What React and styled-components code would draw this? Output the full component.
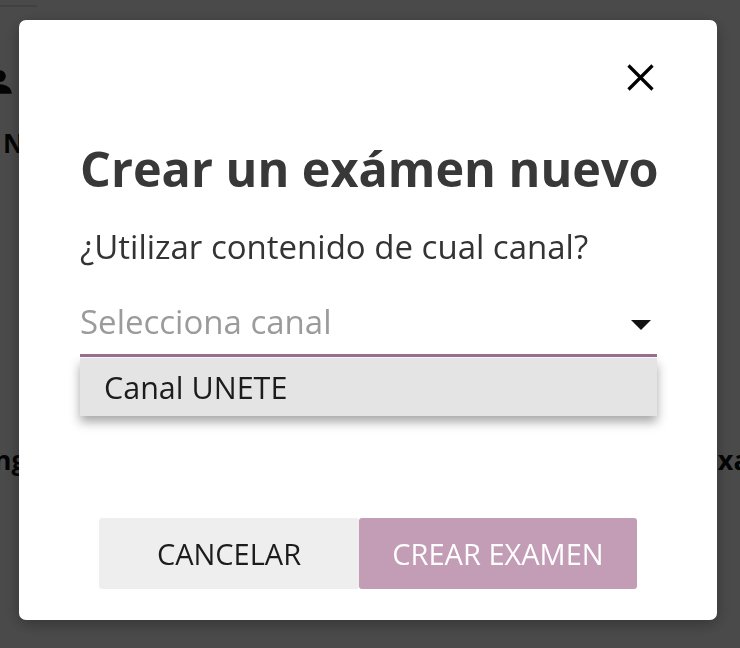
import React, { useState } from "react";
import styled, { createGlobalStyle } from "styled-components";

const GlobalStyle = createGlobalStyle`
	html, body {
		margin: 0;
		padding: 0;
		width: 740px;
		height: 648px;
		overflow: hidden;
		font-family: "Open Sans", "Noto Sans", sans-serif;
		background: #fff;
	}
`;

const Page = styled.div`
	width: 740px;
	height: 648px;
	position: relative;
	overflow: hidden;
	color: #111;
	.topline {
		width: 37px;
		height: 2px;
		margin-top: 5px;
		background: #e0e0e0;
	}
	.user {
		margin: 60px 0 0 -14px;
		display: block;
	}
	.heading {
		margin: 28px 0 0 3px;
		font-size: 26px;
		font-weight: 700;
	}
	.row {
		display: flex;
		justify-content: space-between;
		margin-top: 280px;
		font-size: 27px;
		font-weight: 700;
	}
	.row span:first-child {
		margin-left: -83px;
	}
	.row span:last-child {
		margin-right: -70px;
	}
`;

const Overlay = styled.div`
	position: fixed;
	inset: 0;
	background: rgba(0, 0, 0, 0.71);
	display: flex;
	align-items: flex-start;
	padding: 20px 0 0 19px;
	box-sizing: border-box;
`;

const Modal = styled.div`
	width: 698px;
	height: 600px;
	background: #fff;
	border-radius: 7px;
	box-sizing: border-box;
	padding: 44px 60px 31px 61px;
	display: flex;
	flex-direction: column;
	box-shadow: 0 4px 16px rgba(0, 0, 0, 0.3);
`;

const Header = styled.div`
	display: flex;
	justify-content: flex-end;
	margin-right: 3px;
`;

const CloseButton = styled.button`
	border: none;
	background: none;
	padding: 0;
	width: 27px;
	height: 27px;
	cursor: pointer;
	display: flex;
`;

const Title = styled.h1`
	margin: 49px 0 0;
	font-size: 48.5px;
	line-height: 56px;
	font-weight: 700;
	color: #383838;
	white-space: nowrap;
`;

const Question = styled.p`
	margin: 31px 0 0;
	font-size: 33px;
	line-height: 40px;
	color: #333;
	white-space: nowrap;
`;

const SelectField = styled.div`
	position: relative;
	margin-top: 35px;
	height: 52px;
	border-bottom: 3px solid #9c6f90;
	display: flex;
	align-items: flex-start;
	justify-content: space-between;
	font-size: 33px;
	line-height: 40px;
	color: #9b9b9b;
	cursor: pointer;
`;

const Caret = styled.span`
	width: 0;
	height: 0;
	margin: 18px 6px 0 0;
	border-left: 10px solid transparent;
	border-right: 10px solid transparent;
	border-top: 10px solid #111;
`;

const Menu = styled.ul`
	position: absolute;
	top: 56px;
	left: 0;
	right: 0;
	margin: 0;
	padding: 0;
	list-style: none;
	background: #e4e4e4;
	box-shadow: 0 6px 10px rgba(0, 0, 0, 0.35);
`;

const Option = styled.li`
	height: 58px;
	padding-left: 24px;
	display: flex;
	align-items: center;
	font-size: 30.5px;
	color: #1c1c1c;
`;

const Actions = styled.div`
	margin-top: auto;
	display: flex;
	justify-content: center;
	margin-left: -1px;
`;

const Button = styled.button`
	height: 71px;
	width: ${(p) => p.width}px;
	border: none;
	border-radius: 3px;
	font-family: inherit;
	font-size: 29px;
	text-transform: uppercase;
	background: ${(p) => (p.primary ? "#c29db5" : "#eeeeee")};
	color: ${(p) => (p.primary ? "#fff" : "#1c1c1c")};
	cursor: pointer;
`;

export default function App() {
	const [open] = useState(true);

	return (
		<>
			<GlobalStyle />
			<Page>
				<div className="topline" />
				<svg className="user" width="28" height="30" viewBox="0 0 24 24" fill="#111">
					<circle cx="12" cy="7" r="5" />
					<path d="M2 22c0-5 4.5-8 10-8s10 3 10 8z" />
				</svg>
				<div className="heading">Nuevo</div>
				<div className="row">
					<span>Ranking</span>
					<span>Examen</span>
				</div>
			</Page>
			<Overlay>
				<Modal>
					<Header>
						<CloseButton aria-label="Cerrar">
							<svg width="27" height="27" viewBox="0 0 27 27">
								<path d="M1.5 1.5L25.5 25.5M25.5 1.5L1.5 25.5" stroke="#000" strokeWidth="3.2" />
							</svg>
						</CloseButton>
					</Header>
					<Title>Crear un exámen nuevo</Title>
					<Question>¿Utilizar contenido de cual canal?</Question>
					<SelectField>
						<span>Selecciona canal</span>
						<Caret />
						{open && (
							<Menu>
								<Option>Canal UNETE</Option>
							</Menu>
						)}
					</SelectField>
					<Actions>
						<Button width={260}>Cancelar</Button>
						<Button width={278} primary>
							Crear examen
						</Button>
					</Actions>
				</Modal>
			</Overlay>
		</>
	);
}
